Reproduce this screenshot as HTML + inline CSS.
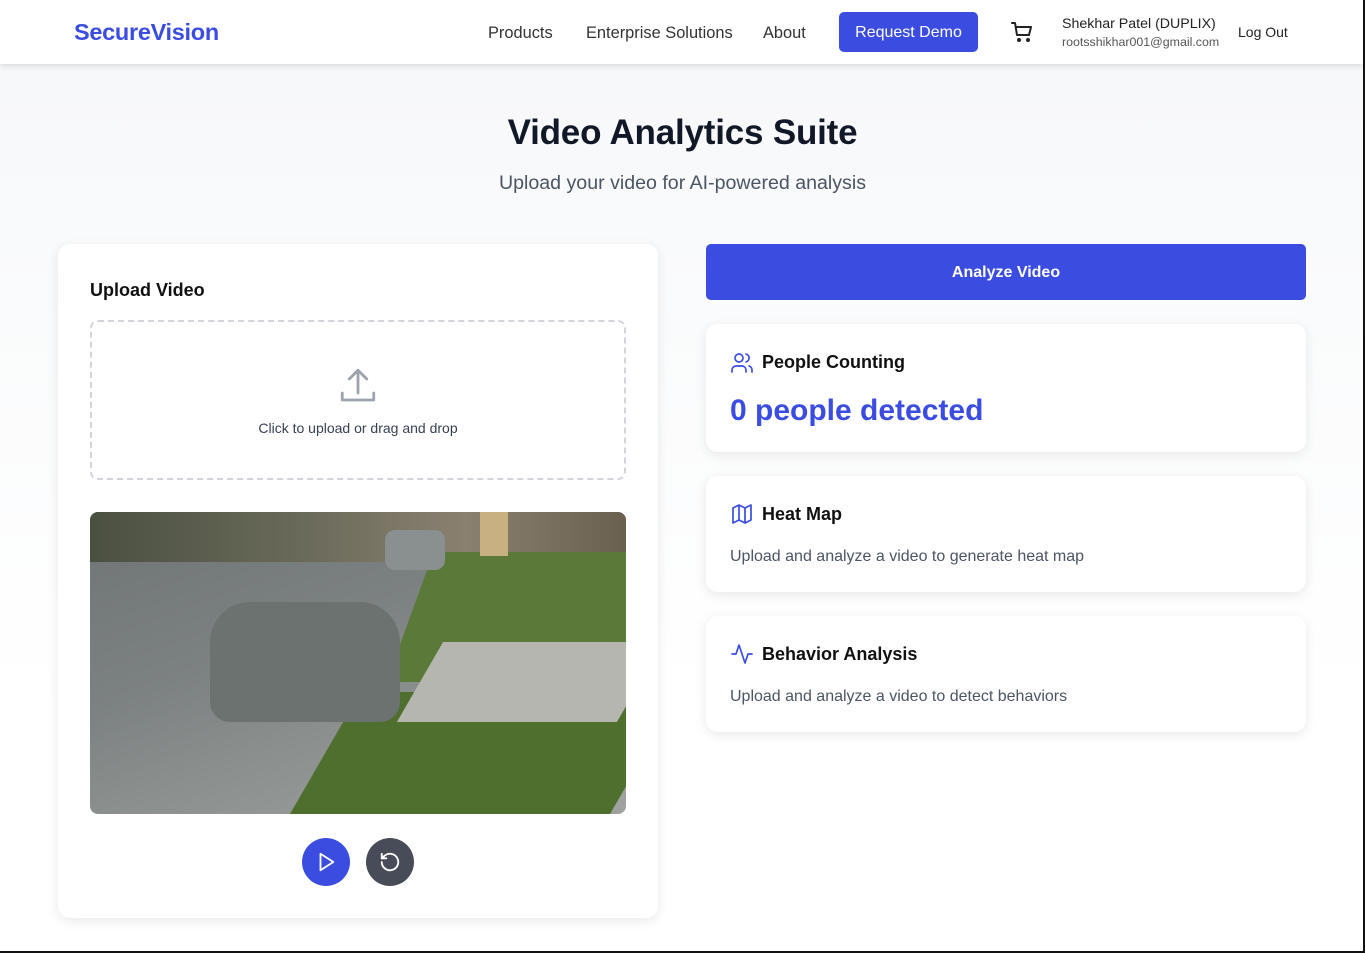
<!DOCTYPE html>
<html><head><meta charset="utf-8"><style>
*{box-sizing:border-box;margin:0;padding:0}
body{width:1365px;height:953px;overflow:hidden;font-family:"Liberation Sans",Arial,sans-serif;background:linear-gradient(#f6f7f9 0,#fafbfc 300px,#fff 700px);position:relative;color:#111}
.nav{position:absolute;left:0;top:0;width:1363px;height:64px;background:#fff;box-shadow:0 2px 6px rgba(0,0,0,.12);z-index:2}
.logo{position:absolute;left:74px;top:19px;font-size:23.5px;font-weight:bold;color:#3b4de0;letter-spacing:-.3px}
.nl{position:absolute;top:24px;font-size:16.4px;color:#333}
.demo{position:absolute;left:839px;top:12px;width:139px;height:40px;background:#3b4de0;color:#fff;border-radius:5px;font-size:16px;text-align:center;line-height:41px}
.card{position:absolute;background:#fff;border-radius:12px;box-shadow:0 3px 12px rgba(0,0,0,.09)}
h1{position:absolute;left:0;width:1365px;top:113px;text-align:center;font-size:35px;font-weight:bold;color:#111827;letter-spacing:-.2px}
.sub{position:absolute;left:0;width:1365px;top:172px;text-align:center;font-size:19.6px;color:#4b5563}
.ttl{position:absolute;font-size:18px;font-weight:bold;color:#111}
.desc{position:absolute;font-size:16px;color:#4b5563}
</style></head><body>
<div class="nav">
<div class="logo">SecureVision</div>
<div class="nl" style="left:488px">Products</div>
<div class="nl" style="left:586px">Enterprise Solutions</div>
<div class="nl" style="left:763px">About</div>
<div class="demo">Request Demo</div>
<svg style="position:absolute;left:1010px;top:20px" width="24" height="24" viewBox="0 0 24 24" fill="none" stroke="#222" stroke-width="2" stroke-linecap="round" stroke-linejoin="round"><path d="M2 3h3l2 12h12l2-8H6"/><circle cx="9" cy="20" r="1" fill="#222"/><circle cx="18" cy="20" r="1" fill="#222"/></svg>
<div style="position:absolute;left:1062px;top:16px;font-size:14.2px;color:#222">Shekhar Patel (DUPLIX)</div>
<div style="position:absolute;left:1062px;top:35px;font-size:12.4px;color:#555">rootsshikhar001@gmail.com</div>
<div style="position:absolute;left:1238px;top:24px;font-size:14px;color:#222">Log Out</div>
</div>
<h1>Video Analytics Suite</h1>
<div class="sub">Upload your video for AI-powered analysis</div>

<div class="card" style="left:58px;top:244px;width:600px;height:674px">
<div class="ttl" style="left:32px;top:36px">Upload Video</div>
<div style="position:absolute;left:32px;top:76px;width:536px;height:160px;border:2px dashed #d1d5db;border-radius:8px">
<svg style="position:absolute;left:245px;top:43px" width="42" height="42" viewBox="0 0 24 24" fill="none" stroke="#9ca3af" stroke-width="1.6" stroke-linecap="round" stroke-linejoin="round"><path d="M3 16v4h18v-4M12 3v13M7 8l5-5 5 5"/></svg>
<div style="position:absolute;left:0;width:532px;top:98px;text-align:center;font-size:14px;color:#374151">Click to upload or drag and drop</div>
</div>
<div style="position:absolute;left:32px;top:268px;width:536px;height:302px;border-radius:8px;overflow:hidden;background:linear-gradient(160deg,#6f7474 0%,#7c8181 40%,#8a8f8e 60%,#a0a39f 100%)">
<div style="position:absolute;left:0;top:0;width:536px;height:50px;background:linear-gradient(90deg,#4a5040,#6a6a5a 40%,#8a8070 70%,#6a6050)"></div>
<div style="position:absolute;left:320px;top:40px;width:240px;height:130px;background:#5b7a3a;transform:skewX(-20deg)"></div>
<div style="position:absolute;left:230px;top:180px;width:320px;height:140px;background:#4f6f2f;transform:skewX(-30deg)"></div>
<div style="position:absolute;left:330px;top:130px;width:220px;height:80px;background:#b5b6b0;transform:skewX(-30deg)"></div>
<div style="position:absolute;left:120px;top:90px;width:190px;height:120px;background:#6b7270;border-radius:40px 40px 20px 20px"></div>
<div style="position:absolute;left:295px;top:18px;width:60px;height:40px;background:#8a9090;border-radius:10px"></div>
<div style="position:absolute;left:390px;top:0;width:28px;height:44px;background:#c8b080"></div>
</div>
<div style="position:absolute;left:244px;top:594px;width:48px;height:48px;border-radius:50%;background:#3b4de0"><svg style="position:absolute;left:13px;top:13px" width="22" height="22" viewBox="0 0 24 24" fill="none" stroke="#fff" stroke-width="2" stroke-linejoin="round"><path d="M6 3l14 9-14 9z"/></svg></div>
<div style="position:absolute;left:308px;top:594px;width:48px;height:48px;border-radius:50%;background:#474c58"><svg style="position:absolute;left:13px;top:13px" width="22" height="22" viewBox="0 0 24 24" fill="none" stroke="#fff" stroke-width="2" stroke-linecap="round" stroke-linejoin="round"><path d="M3 12a9 9 0 1 0 3-6.7L3 8"/><path d="M3 3v5h5"/></svg></div>
</div>

<div style="position:absolute;left:706px;top:244px;width:600px;height:56px;background:#3b4de0;border-radius:5px;color:#fff;font-weight:bold;font-size:16px;text-align:center;line-height:57px">Analyze Video</div>

<div class="card" style="left:706px;top:324px;width:600px;height:128px">
<svg style="position:absolute;left:24px;top:27px" width="24" height="24" viewBox="0 0 24 24" fill="none" stroke="#3b4de0" stroke-width="1.7" stroke-linecap="round"><circle cx="9" cy="7" r="4"/><path d="M2 21v-2a4 4 0 0 1 4-4h6a4 4 0 0 1 4 4v2M16 3.1a4 4 0 0 1 0 7.8M22 21v-2a4 4 0 0 0-3-3.9"/></svg>
<div class="ttl" style="left:56px;top:28px">People Counting</div>
<div style="position:absolute;left:24px;top:70px;font-size:30px;font-weight:bold;color:#3b4de0">0 people detected</div>
</div>

<div class="card" style="left:706px;top:476px;width:600px;height:116px">
<svg style="position:absolute;left:24px;top:26px" width="24" height="24" viewBox="0 0 24 24" fill="none" stroke="#3b4de0" stroke-width="1.7" stroke-linejoin="round"><path d="M3 6l6-3 6 3 6-3v15l-6 3-6-3-6 3zM9 3v15M15 6v15"/></svg>
<div class="ttl" style="left:56px;top:28px">Heat Map</div>
<div class="desc" style="left:24px;top:72px">Upload and analyze a video to generate heat map</div>
</div>

<div class="card" style="left:706px;top:616px;width:600px;height:116px">
<svg style="position:absolute;left:24px;top:26px" width="24" height="24" viewBox="0 0 24 24" fill="none" stroke="#3b4de0" stroke-width="1.7" stroke-linecap="round" stroke-linejoin="round"><path d="M22 12h-4l-3 9L9 3l-3 9H2"/></svg>
<div class="ttl" style="left:56px;top:28px">Behavior Analysis</div>
<div class="desc" style="left:24px;top:72px">Upload and analyze a video to detect behaviors</div>
</div>

<div style="position:absolute;left:0;top:951px;width:1365px;height:2px;background:#111"></div>
<div style="position:absolute;left:1363px;top:0;width:2px;height:953px;background:#111"></div>
</body></html>
